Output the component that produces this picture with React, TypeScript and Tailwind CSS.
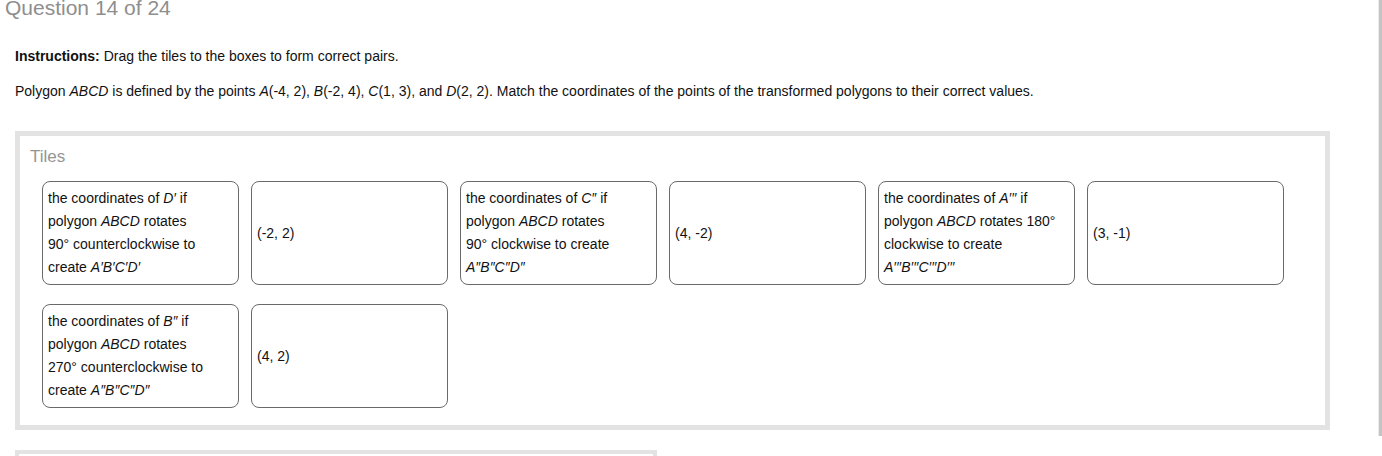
import React from 'react';

type Tile = { kind: 'text'; lines: React.ReactNode[] } | { kind: 'value'; value: string };

const tiles: Tile[] = [
  {
    kind: 'text',
    lines: [
      <>the coordinates of <i>D′</i> if</>,
      <>polygon <i>ABCD</i> rotates</>,
      <>90° counterclockwise to</>,
      <>create <i>A′B′C′D′</i></>,
    ],
  },
  { kind: 'value', value: '(-2, 2)' },
  {
    kind: 'text',
    lines: [
      <>the coordinates of <i>C″</i> if</>,
      <>polygon <i>ABCD</i> rotates</>,
      <>90° clockwise to create</>,
      <><i>A″B″C″D″</i></>,
    ],
  },
  { kind: 'value', value: '(4, -2)' },
  {
    kind: 'text',
    lines: [
      <>the coordinates of <i>A′′′</i> if</>,
      <>polygon <i>ABCD</i> rotates 180°</>,
      <>clockwise to create</>,
      <><i>A′′′B′′′C′′′D′′′</i></>,
    ],
  },
  { kind: 'value', value: '(3, -1)' },
  {
    kind: 'text',
    lines: [
      <>the coordinates of <i>B″</i> if</>,
      <>polygon <i>ABCD</i> rotates</>,
      <>270° counterclockwise to</>,
      <>create <i>A″B″C″D″</i></>,
    ],
  },
  { kind: 'value', value: '(4, 2)' },
];

export default function App() {
  return (
    <div className="relative h-[456px] w-[1382px] overflow-hidden bg-white font-['Liberation_Sans',Arial,sans-serif] text-[14px] text-[#111]">
      {/* scrollbar edge */}
      <div className="absolute right-0 top-0 h-[436px] w-[4px] border-l border-[#ececec] bg-[#c4c4c4]" />

      <div className="-mt-[5px] pl-[5px] text-[21px] leading-[26px] text-[#8e8e8e]">Question 14 of 24</div>

      <div className="pl-[15px]">
        <p className="mt-[26px] leading-[18px]">
          <b>Instructions:</b> Drag the tiles to the boxes to form correct pairs.
        </p>
        <p className="mt-[17px] leading-[18px]">
          Polygon <i>ABCD</i> is defined by the points <i>A</i>(-4, 2), <i>B</i>(-2, 4), <i>C</i>(1, 3), and{' '}
          <i>D</i>(2, 2). Match the coordinates of the points of the transformed polygons to their correct values.
        </p>

        <div className="mt-[31px] w-[1315px] border-[5px] border-[#e3e3e3] bg-white pb-[17px]">
          <div className="px-[10px] pt-[11px] text-[17px] leading-[20px] text-[#959595]">Tiles</div>
          <div className="mt-[14px] flex flex-wrap gap-x-[12px] gap-y-[19px] pl-[22px]">
            {tiles.map((t, i) =>
              t.kind === 'text' ? (
                <div key={i} className="h-[104px] w-[197px] rounded-[8px] border border-[#6a6a6a] px-[5px] pt-[5px] leading-[23px]">
                  {t.lines.map((l, j) => (
                    <div key={j} className="whitespace-nowrap">{l}</div>
                  ))}
                </div>
              ) : (
                <div key={i} className="flex h-[104px] w-[197px] items-center rounded-[8px] border border-[#6a6a6a] px-[5px]">
                  {t.value}
                </div>
              )
            )}
          </div>
        </div>

        <div className="mt-[20px] h-[40px] w-[642px] border-[4px] border-[#e3e3e3]" />
      </div>
    </div>
  );
}
